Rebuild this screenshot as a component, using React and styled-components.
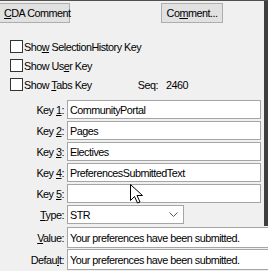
import React from "react";
import styled, { createGlobalStyle } from "styled-components";

const Global = createGlobalStyle`
  html, body { margin: 0; padding: 0; background: #f0f0f0; }
  body { font-family: "Liberation Sans", Arial, sans-serif; font-size: 10px; color: #000; }
`;

const Root = styled.div`
  position: relative;
  width: 268px;
  height: 271px;
  overflow: hidden;
  background: #f0f0f0;
  border-top: 1px solid #505050;
  box-sizing: border-box;
  letter-spacing: -0.5px;
  font-size: 10.8px;
`;

const Framed = styled.div`
  border-right: 4px solid #3f3f3f;
  box-sizing: border-box;
  width: 268px;
  padding-bottom: 2px;
`;

const TopBar = styled.div`
  display: flex;
  justify-content: space-between;
  padding: 2px 41px 0 0;
  margin-left: -1px;
`;

const Button = styled.div`
  height: 20px;
  box-sizing: border-box;
  width: ${(p) => p.$w}px;
  background: #e1e1e1;
  border: 1px solid #adadad;
  display: flex;
  align-items: center;
  justify-content: ${(p) => (p.$center ? "center" : "flex-start")};
  padding-left: ${(p) => (p.$center ? 0 : 4)}px;
  white-space: pre;
`;

const Checks = styled.div`
  display: flex;
  flex-direction: column;
  margin-top: 14px;
  padding-left: 10px;
`;

const CheckRow = styled.div`
  height: 19px;
  display: flex;
  align-items: center;
`;

const Box = styled.span`
  width: 13px;
  height: 13px;
  box-sizing: border-box;
  border: 1px solid #333;
  background: #fff;
  margin-right: 1px;
  flex: none;
`;

const Text = styled.span`
  white-space: pre;
`;

const Seq = styled.span`
  margin-left: 46px;
  display: flex;
  gap: 8px;
`;

const Fields = styled.div`
  display: flex;
  flex-direction: column;
  gap: 2px;
  margin-top: 6px;
`;

const FieldRow = styled.div`
  display: grid;
  grid-template-columns: 64px ${(p) => p.$w || "194px"};
  column-gap: 3px;
  height: ${(p) => p.$h || 19}px;
  align-items: center;
  margin-top: ${(p) => p.$mt || 0}px;
`;

const Label = styled.span`
  text-align: right;
  white-space: pre;
`;

const Input = styled.div`
  height: ${(p) => p.$h || 19}px;
  box-sizing: border-box;
  background: #fff;
  border: 1px solid #a5a5a5;
  display: flex;
  align-items: center;
  padding-left: 2px;
  white-space: pre;
  position: relative;
`;

const Chevron = styled.svg`
  position: absolute;
  right: 5px;
  top: 6px;
`;

const Cursor = styled.svg`
  position: absolute;
  left: 130px;
  top: 183px;
`;

const U = styled.span`
  text-decoration: underline;
  text-underline-offset: 1px;
`;

function Key({ n, value }) {
  return (
    <FieldRow>
      <Label>
        Key <U>{n}</U>:
      </Label>
      <Input>
        <Text>{value}</Text>
      </Input>
    </FieldRow>
  );
}

export default function App() {
  return (
    <>
      <Global />
      <Root>
        <Framed>
          <TopBar>
            <Button $w={71}>
              <Text>
                <U>C</U>DA Comment
              </Text>
            </Button>
            <Button $w={62} $center>
              <Text>
                Co<U>m</U>ment...
              </Text>
            </Button>
          </TopBar>
          <Checks>
            <CheckRow>
              <Box />
              <Text>
                Sho<U>w</U> SelectionHistory Key
              </Text>
            </CheckRow>
            <CheckRow>
              <Box />
              <Text>
                Show Us<U>e</U>r Key
              </Text>
            </CheckRow>
            <CheckRow>
              <Box />
              <Text>
                Show <U>T</U>abs Key
              </Text>
              <Seq>
                <Text>Seq:</Text>
                <Text>2460</Text>
              </Seq>
            </CheckRow>
          </Checks>
          <Fields>
            <Key n="1" value="CommunityPortal" />
            <Key n="2" value="Pages" />
            <Key n="3" value="Electives" />
            <Key n="4" value="PreferencesSubmittedText" />
            <Key n="5" value="" />
            <FieldRow $w="117px">
              <Label>
                <U>T</U>ype:
              </Label>
              <Input>
                <Text>STR</Text>
                <Chevron width="9" height="6" viewBox="0 0 9 6">
                  <path d="M0.5 0.5 L4.5 4.5 L8.5 0.5" fill="none" stroke="#555" strokeWidth="1" />
                </Chevron>
              </Input>
            </FieldRow>
          </Fields>
        </Framed>
        <FieldRow $w="210px" $mt={1} $h={21}>
          <Label>
            <U>V</U>alue:
          </Label>
          <Input $h={21}>
            <Text>Your preferences have been submitted.</Text>
          </Input>
        </FieldRow>
        <FieldRow $w="210px" $mt={1} $h={21}>
          <Label>
            Defau<U>l</U>t:
          </Label>
          <Input $h={21}>
            <Text>Your preferences have been submitted.</Text>
          </Input>
        </FieldRow>
        <Cursor width="13" height="20" viewBox="0 0 13 20">
          <path
            d="M0.5 0.5 L0.5 16.5 L4.5 12.5 L7.5 19 L10 18 L7 11.5 L12.5 11.5 Z"
            fill="#fff"
            stroke="#000"
            strokeWidth="1"
            strokeLinejoin="miter"
          />
        </Cursor>
      </Root>
    </>
  );
}
